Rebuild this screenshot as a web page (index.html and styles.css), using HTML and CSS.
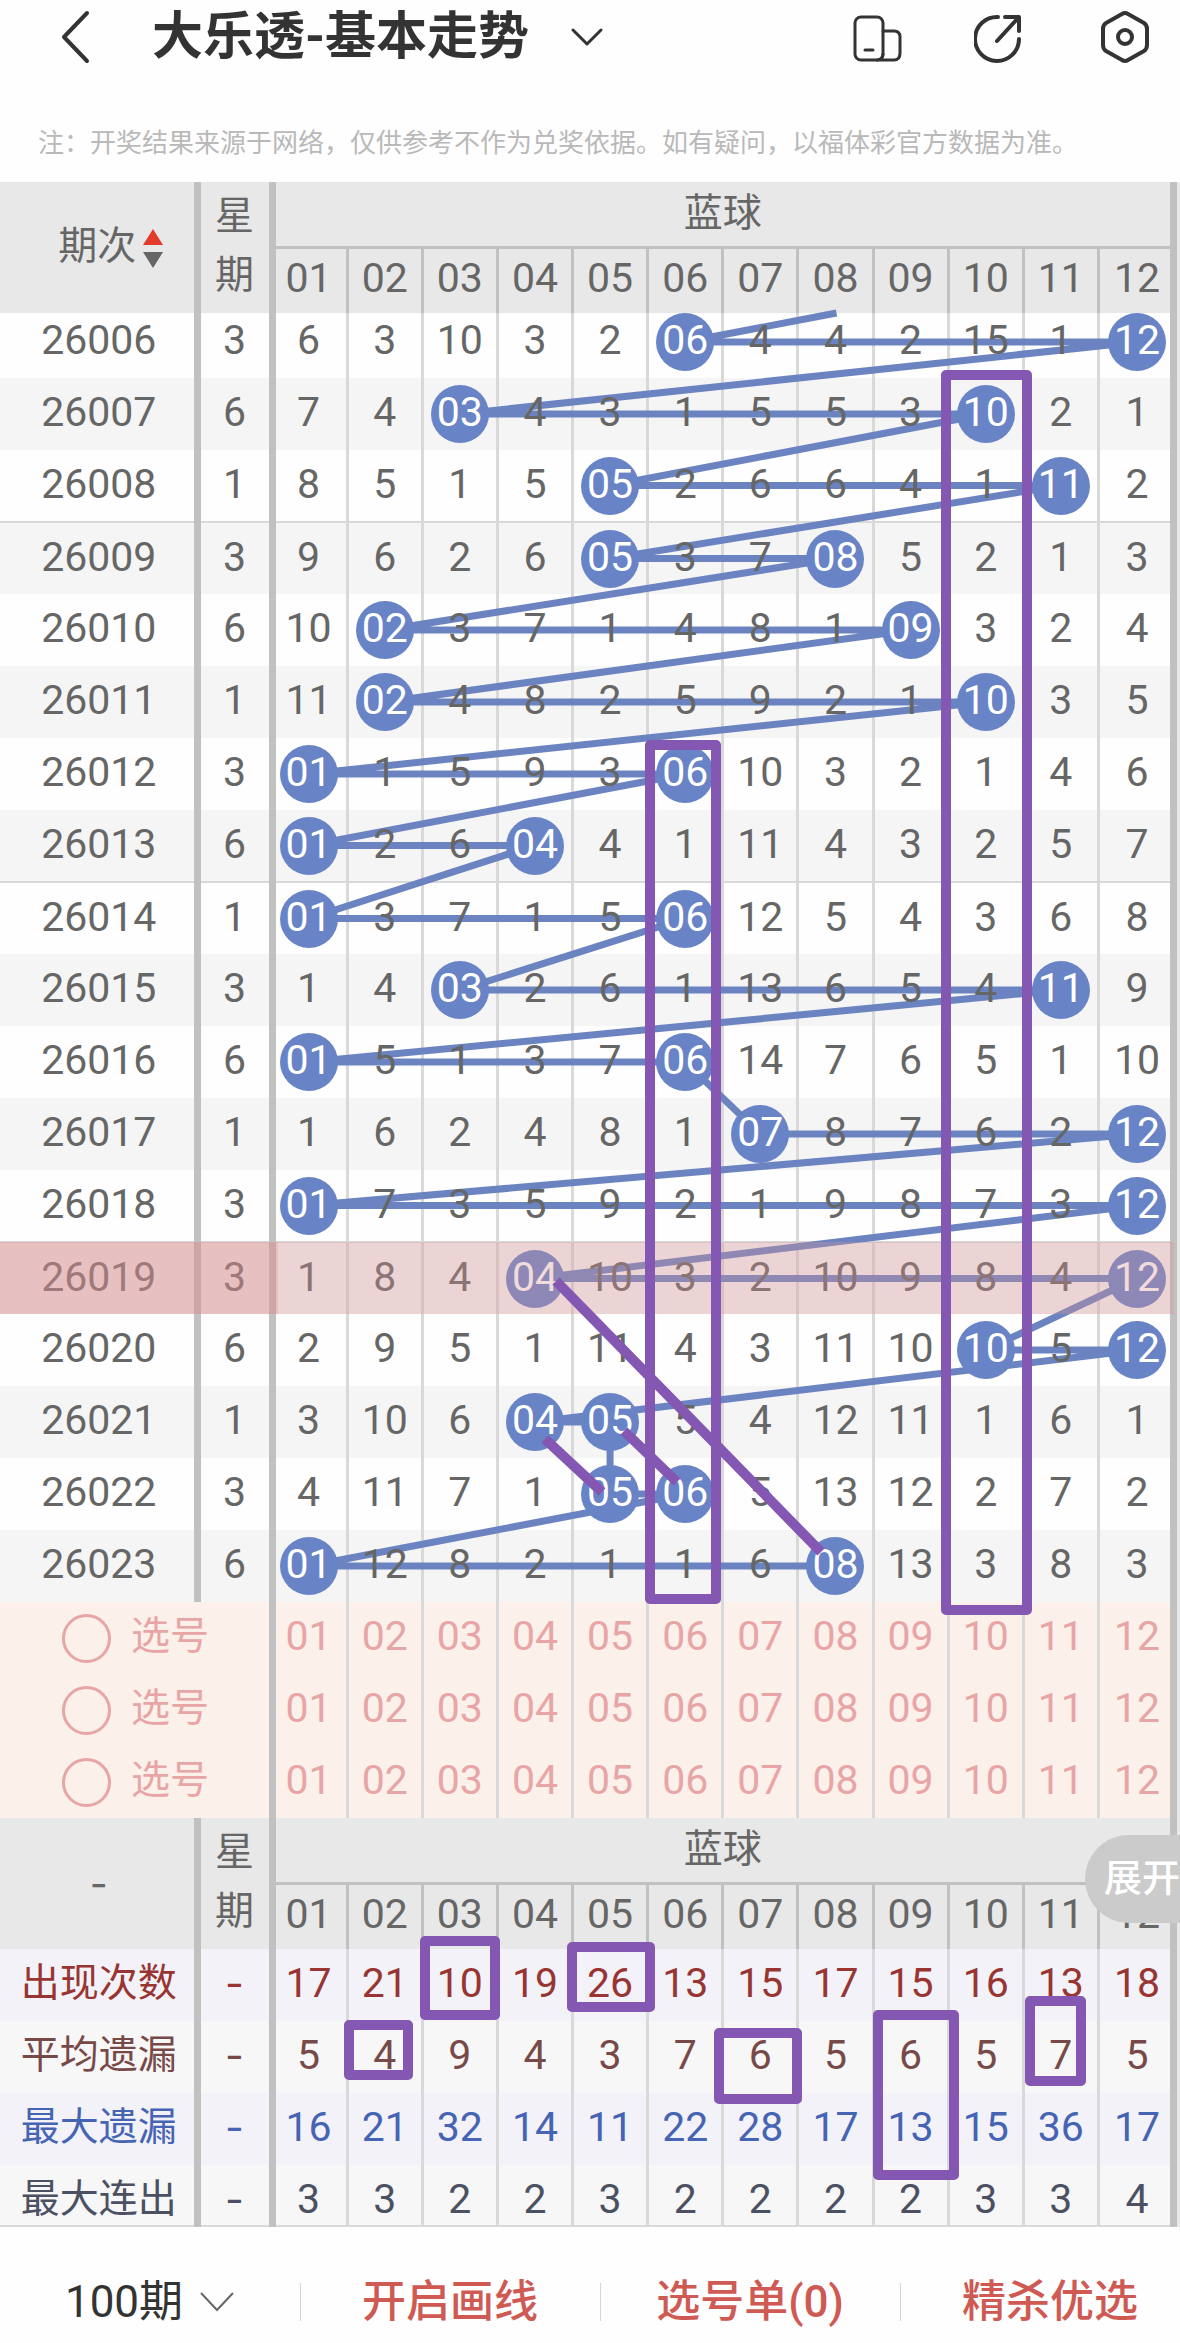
FILE: index.html
```
<!DOCTYPE html>
<html lang="zh-CN">
<head>
  <meta charset="UTF-8" />
  <meta name="viewport" content="width=device-width, initial-scale=1.0" />
  <title>大乐透-基本走势</title>
  <link rel="stylesheet" href="styles.css">
</head>
<body>
  <header class="topbar">
    <button class="icon-btn back" aria-label="返回">
      <svg width="32" height="54" viewBox="0 0 32 54"><path d="M27 3 L4 27 L27 51" /></svg>
    </button>
    <h1 class="title">大乐透-基本走势</h1>
    <button class="icon-btn more" aria-label="切换走势">
      <svg width="32" height="20" viewBox="0 0 32 20"><path class="thin" d="M2 3 L16 17 L30 3" /></svg>
    </button>
    <div class="tools">
      <button class="icon-btn" aria-label="横竖屏">
        <svg width="54" height="54" viewBox="0 0 54 54">
          <rect class="thin" x="5" y="7" width="28" height="43" rx="6" />
          <path class="thin" d="M33 21 H44 Q50 21 50 27 V43 Q50 50 44 50 H27 Q33 50 33 44 M15 40 H23" />
        </svg>
      </button>
      <button class="icon-btn" aria-label="分享">
        <svg width="54" height="54" viewBox="0 0 54 54">
          <path d="M24 7 A22 22 0 1 0 45 29 M23 31 L44 8 M31 7 H45 V21" />
        </svg>
      </button>
      <button class="icon-btn" aria-label="设置">
        <svg width="54" height="54" viewBox="0 0 54 54">
          <path d="M24 4 Q27 2 30 4 L46 13 Q49 15 49 19 V35 Q49 39 46 41 L30 50 Q27 52 24 50 L8 41 Q5 39 5 35 V19 Q5 15 8 13 Z" />
          <circle cx="27" cy="27" r="7" />
        </svg>
      </button>
    </div>
  </header>
  <p class="note">注：开奖结果来源于网络，仅供参考不作为兑奖依据。如有疑问，以福体彩官方数据为准。</p>

  <main class="chart" id="chart">
    <table class="trend">
      <colgroup>
        <col class="col-issue"><col class="col-week"><col span="12">
      </colgroup>
      <thead id="head">
        <tr class="head-top">
          <th rowspan="2" class="issue">
            <button class="sort">期次
              <svg width="20" height="40" viewBox="0 0 20 40"><path class="up" d="M10 0 L20 16 H0 Z" /><path class="down" d="M0 23 H20 L10 39 Z" /></svg>
            </button>
          </th>
          <th rowspan="2" class="week">星<br>期</th>
          <th colspan="12" class="group">蓝球</th>
        </tr>
      </thead>
      <tbody id="draws"></tbody>
      <tbody id="picks"></tbody>
      <tbody id="head2">
        <tr class="head-top">
          <th rowspan="2" class="issue dash">-</th>
          <th rowspan="2" class="week">星<br>期</th>
          <th colspan="12" class="group">蓝球</th>
        </tr>
      </tbody>
      <tbody id="stats"></tbody>
    </table>
    <svg class="lines" id="lines"></svg>
    <svg class="marks" viewBox="0 182 1180 2045" preserveAspectRatio="none">
      <rect x="650" y="745" width="66" height="854" />
      <rect x="946" y="375" width="81" height="1235" />
      <rect x="425" y="1941" width="70" height="74" />
      <rect x="572" y="1947" width="78" height="60" />
      <rect x="349" y="2025" width="59" height="50" />
      <rect x="719" y="2033" width="78" height="66" />
      <rect x="878" y="2015" width="76" height="160" />
      <rect x="1030" y="2001" width="51" height="80" />
      <path d="M556 1281 L821 1552 M545 1439 L602 1492 M624 1431 L677 1482" />
    </svg>
    <button class="expand">展开</button>
  </main>

  <nav class="bottombar">
    <button class="period">100期
      <svg width="36" height="22" viewBox="0 0 36 22"><path d="M2 2 L18 19 L34 2" /></svg>
    </button>
    <button>开启画线</button>
    <button>选号单(0)</button>
    <button>精杀优选</button>
  </nav>
  <script src="script.js"></script>
</body>
</html>
```
FILE: styles.css
```
:root {
  --text: #666;
  --ball: #6883c6;
  --pick: #e8a5a5;
  --line: #d9d9d9;
  --rule: #c1c1c1;
  --red: #cf5a54;
  --mark: #8457b3;
}
* { box-sizing: border-box; margin: 0; padding: 0; }
body {
  background: #fefefe;
  color: var(--text);
  font-family: Roboto, "Noto Sans CJK SC", sans-serif;
  overflow-x: hidden;
}
button {
  border: none;
  background: none;
  color: inherit;
  font: inherit;
  cursor: pointer;
}
svg { display: block; }

.topbar {
  display: flex;
  align-items: center;
  height: 74px;
  padding: 0 28px 0 60px;
  color: #333;
}
.icon-btn svg {
  fill: none;
  stroke: #333;
  stroke-width: 4;
  stroke-linecap: round;
  stroke-linejoin: round;
}
.icon-btn .thin { stroke-width: 3; }
.title {
  margin-left: 60px;
  font-size: 51px;
  line-height: 74px;
  font-weight: 700;
}
.more { margin-left: 42px; }
.tools {
  display: flex;
  gap: 70px;
  margin-left: auto;
}
.note {
  height: 108px;
  padding: 51px 0 0 38px;
  font-size: 26px;
  line-height: 36px;
  color: #b9b9b9;
  white-space: nowrap;
}

.chart {
  position: relative;
  padding-right: 3px;
  background: linear-gradient(#e8e8e8, #e8e8e8) right / 4px 100% no-repeat;
}
.trend {
  width: 100%;
  table-layout: fixed;
  border-collapse: collapse;
  font-size: 41px;
  text-align: center;
}
.col-issue { width: 197px; }
.col-week { width: 75px; }
th { font-weight: 400; background: #e8e8e8; }
th, td {
  height: 72px;
  line-height: 52px;
  border-left: 3px solid var(--line);
}
.issue, .pick { border-left: none; }
.issue { padding-left: 4px; }
.week, .first, .group { border-left: 7px solid var(--rule); }
.last, .group { border-right: 7px solid var(--rule); }
.first { padding-right: 4px; }
.last { padding-left: 4px; }
.week, .issue, .group { font-size: 39px; }
td.issue, td.week { font-size: 41px; }
.dash { font-family: Inter, sans-serif; }

/* header */
.head-top th { height: 65px; }
.head-top .week { line-height: 59px; padding-bottom: 4px; }
.head-top .group { padding-bottom: 1px; }
.head-nums th {
  height: 66px;
  padding-bottom: 5px;
  border-top: 3px solid var(--rule);
  border-left-color: var(--rule);
}
.sort {
  display: flex;
  align-items: center;
  justify-content: center;
  gap: 7px;
  width: 100%;
  padding: 0 0 3px 24px;
}
.sort svg { margin-top: 5px; }
.up { fill: #e23b2b; }
.down { fill: #666; }

/* draws */
.value {
  position: relative;
  z-index: 2;
  display: block;
  width: 58px;
  height: 58px;
  margin: 0 auto;
  line-height: 55px;
}
.issue .value { width: auto; }
.ball {
  border-radius: 50%;
  background: var(--ball);
  color: #fff;
}
.odd td { background: #f5f5f5; }
.cut td { height: 65px; padding-bottom: 7px; }
.split td { border-top: 2px solid var(--line); }
/* tint is sized by the row, but has to live inside a cell */
.current { position: relative; }
.current .last::after {
  content: "";
  position: absolute;
  inset: 0;
  z-index: 3;
  background: linear-gradient(to right, rgba(217,139,141,.5) 278px, rgba(217,145,148,.33) 278px);
}

/* picks */
.picks td {
  padding-bottom: 4px;
  background: #fcf0eb;
  color: var(--pick);
}
.pick label {
  display: flex;
  align-items: center;
  gap: 20px;
  padding-left: 62px;
  font-size: 39px;
}
.pick input {
  appearance: none;
  width: 49px;
  height: 49px;
  margin-top: 4px;
  border: 3px solid var(--pick);
  border-radius: 50%;
}

/* stats */
.stats td { padding-bottom: 4px; background: #f7f7f8; }
.stats:nth-child(odd) td { background: #f2f2f8; }
.stats td.issue { font-size: 39px; }
.stats:last-child td {
  height: 61px;
  padding-top: 7px;
  padding-bottom: 0;
  border-bottom: 2px solid var(--line);
}
.count { color: #983532; }
.avg { color: #774a48; }
.max { color: #4664b4; }
.streak { color: #4b5163; }

/* layers over the table */
.lines, .marks {
  position: absolute;
  inset: 0;
  width: 100%;
  height: 100%;
  fill: none;
  pointer-events: none;
}
.lines { z-index: 1; stroke: #6b84c1; stroke-width: 7; }
.marks { z-index: 4; stroke: var(--mark); stroke-width: 10; stroke-linejoin: round; }
.expand {
  position: absolute;
  right: 0;
  bottom: 304px;
  z-index: 5;
  width: 95px;
  height: 88px;
  padding: 0 0 10px 19px;
  border-radius: 44px 0 0 44px;
  background: #cbcbcc;
  color: #fff;
  font-size: 38px;
  font-weight: 500;
  white-space: nowrap;
}

.bottombar {
  display: flex;
  padding: 50px 0 16px;
  overflow: hidden;
}
.bottombar button {
  position: relative;
  display: flex;
  flex: 0 0 300px;
  align-items: center;
  justify-content: center;
  height: 50px;
  color: var(--red);
  font-size: 44px;
  font-weight: 500;
  line-height: 50px;
}
.bottombar button + button::before {
  content: "";
  position: absolute;
  left: 0;
  top: 6px;
  height: 38px;
  border-left: 1px solid #d5d5d5;
}
.bottombar .period { gap: 16px; color: #333; font-weight: 400; }
.period svg { fill: none; stroke: #666; stroke-width: 2; }
```
FILE: script.js
```
const COLS = 12;

// issue, weekday, misses per number (a drawn number shows as a ball)
const draws = [
  ['26006', 3, [6, 3, 10, 3, 2, 0, 4, 4, 2, 15, 1, 0]],
  ['26007', 6, [7, 4, 0, 4, 3, 1, 5, 5, 3, 0, 2, 1]],
  ['26008', 1, [8, 5, 1, 5, 0, 2, 6, 6, 4, 1, 0, 2]],
  ['26009', 3, [9, 6, 2, 6, 0, 3, 7, 0, 5, 2, 1, 3]],
  ['26010', 6, [10, 0, 3, 7, 1, 4, 8, 1, 0, 3, 2, 4]],
  ['26011', 1, [11, 0, 4, 8, 2, 5, 9, 2, 1, 0, 3, 5]],
  ['26012', 3, [0, 1, 5, 9, 3, 0, 10, 3, 2, 1, 4, 6]],
  ['26013', 6, [0, 2, 6, 0, 4, 1, 11, 4, 3, 2, 5, 7]],
  ['26014', 1, [0, 3, 7, 1, 5, 0, 12, 5, 4, 3, 6, 8]],
  ['26015', 3, [1, 4, 0, 2, 6, 1, 13, 6, 5, 4, 0, 9]],
  ['26016', 6, [0, 5, 1, 3, 7, 0, 14, 7, 6, 5, 1, 10]],
  ['26017', 1, [1, 6, 2, 4, 8, 1, 0, 8, 7, 6, 2, 0]],
  ['26018', 3, [0, 7, 3, 5, 9, 2, 1, 9, 8, 7, 3, 0]],
  ['26019', 3, [1, 8, 4, 0, 10, 3, 2, 10, 9, 8, 4, 0]],
  ['26020', 6, [2, 9, 5, 1, 11, 4, 3, 11, 10, 0, 5, 0]],
  ['26021', 1, [3, 10, 6, 0, 0, 5, 4, 12, 11, 1, 6, 1]],
  ['26022', 3, [4, 11, 7, 1, 0, 0, 5, 13, 12, 2, 7, 2]],
  ['26023', 6, [0, 12, 8, 2, 1, 1, 6, 0, 13, 3, 8, 3]]
];
const current = '26019';

const stats = [
  ['count', '出现次数', [17, 21, 10, 19, 26, 13, 15, 17, 15, 16, 13, 18]],
  ['avg', '平均遗漏', [5, 4, 9, 4, 3, 7, 6, 5, 6, 5, 7, 5]],
  ['max', '最大遗漏', [16, 21, 32, 14, 11, 22, 28, 17, 13, 15, 36, 17]],
  ['streak', '最大连出', [3, 3, 2, 2, 3, 2, 2, 2, 2, 3, 3, 4]]
];

const pad = n => String(n).padStart(2, '0');
const numbers = Array.from({ length: COLS }, (_, i) => pad(i + 1));

function cells(values, tag = 'td') {
  return values.map((v, i) => {
    const cls = i === 0 ? ' class="first"' : i === COLS - 1 ? ' class="last"' : '';
    return `<${tag}${cls}>${v}</${tag}>`;
  }).join('');
}

const headNums = `<tr class="head-nums">${cells(numbers, 'th')}</tr>`;
document.getElementById('head').insertAdjacentHTML('beforeend', headNums);
document.getElementById('head2').insertAdjacentHTML('beforeend', headNums);

document.getElementById('draws').innerHTML = draws.map(([issue, week, misses], r) => {
  const cls = [];
  if (r === 0) cls.push('cut');
  if (r % 2) cls.push('odd');
  if (r % 5 === 3) cls.push('split');
  if (issue === current) cls.push('current');
  const values = misses.map((m, i) => `<span class="value${m ? '' : ' ball'}">${m || numbers[i]}</span>`);
  return `<tr class="${cls.join(' ')}"><td class="issue"><span class="value">${issue}</span></td>` +
    `<td class="week"><span class="value">${week}</span></td>${cells(values)}</tr>`;
}).join('');

document.getElementById('picks').innerHTML = [1, 2, 3].map(() =>
  '<tr class="picks"><td colspan="2" class="pick"><label><input type="radio" name="pick">选号</label></td>' +
  cells(numbers) + '</tr>').join('');

document.getElementById('stats').innerHTML = stats.map(([cls, label, values]) =>
  `<tr class="stats ${cls}"><td class="issue">${label}</td><td class="week dash">-</td>${cells(values)}</tr>`).join('');

// join the balls in draw order
function drawLines() {
  const box = document.getElementById('chart').getBoundingClientRect();
  const points = [...document.querySelectorAll('.ball')].map(ball => {
    const b = ball.getBoundingClientRect();
    return [b.left + b.width / 2 - box.left, b.top + b.height / 2 - box.top];
  });
  // the line coming in from the draw hidden under the header starts at its lower edge
  const head = document.getElementById('head').getBoundingClientRect();
  const col = document.querySelector('.head-nums .first').getBoundingClientRect().width;
  const [x, y] = points[0];
  const edge = head.bottom - box.top;
  points.unshift([x + 5 * col * (y - edge) / 72, edge]);
  document.getElementById('lines').innerHTML = `<polyline points="${points.join(' ')}" />`;
}

drawLines();
window.addEventListener('resize', drawLines);
```
